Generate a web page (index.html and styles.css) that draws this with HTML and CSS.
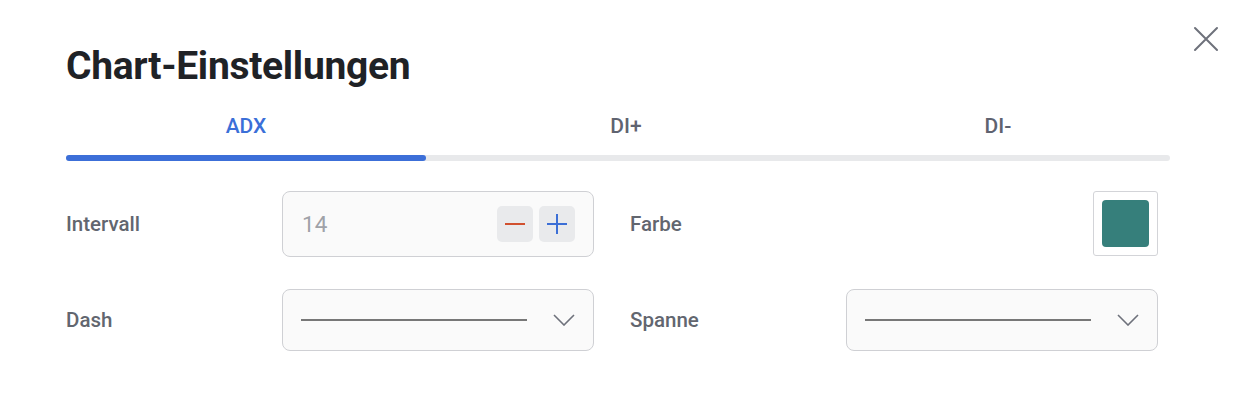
FILE: index.html
```html
<!DOCTYPE html>
<html lang="de">
<head>
<meta charset="utf-8">
<title>Chart-Einstellungen</title>
<link rel="stylesheet" href="styles.css">
</head>
<body>
<div class="dialog">
  <button class="close" aria-label="Schließen">
    <svg width="26" height="26" viewBox="0 0 26 26"><path d="M2 2 L24 24 M24 2 L2 24" stroke="#6e717b" stroke-width="2" stroke-linecap="round" fill="none"/></svg>
  </button>
  <h1 class="title">Chart-Einstellungen</h1>
  <div class="tabs">
    <div class="tab active">ADX</div>
    <div class="tab">DI+</div>
    <div class="tab">DI-</div>
  </div>
  <div class="track"><div class="indicator"></div></div>
  <div class="form">
    <div class="label">Intervall</div>
    <div class="stepper">
      <span class="value">14</span>
      <div class="btns">
        <button class="step"><svg width="22" height="22" viewBox="0 0 22 22"><path d="M1 11 H21" stroke="#d1512f" stroke-width="2"/></svg></button>
        <button class="step"><svg width="22" height="22" viewBox="0 0 22 22"><path d="M1 11 H21 M11 1 V21" stroke="#3c6fd6" stroke-width="2"/></svg></button>
      </div>
    </div>
    <div class="label label-right">Farbe</div>
    <div class="swatch-cell"><div class="swatch"><div class="swatch-fill"></div></div></div>
    <div class="label">Dash</div>
    <div class="select">
      <span class="line"></span>
      <svg width="22" height="12" viewBox="0 0 22 12"><path d="M1 1 L11 11 L21 1" stroke="#6e717b" stroke-width="1.6" fill="none"/></svg>
    </div>
    <div class="label label-right">Spanne</div>
    <div class="select">
      <span class="line"></span>
      <svg width="22" height="12" viewBox="0 0 22 12"><path d="M1 1 L11 11 L21 1" stroke="#6e717b" stroke-width="1.6" fill="none"/></svg>
    </div>
  </div>
</div>
</body>
</html>
```
FILE: styles.css
```css
* { box-sizing: border-box; }
html, body { margin: 0; padding: 0; background: #fff; }
body { font-family: Roboto, "Noto Sans", sans-serif; }
.dialog {
  position: relative;
  width: 1246px;
  height: 408px;
  padding: 40px 76px 0 66px;
}
.close {
  position: absolute;
  top: 26px;
  right: 27px;
  border: 0;
  background: none;
  padding: 0;
  width: 26px;
  height: 26px;
}
.title {
  margin: 0;
  font-size: 39px;
  font-weight: 700;
  color: #1f2226;
  line-height: 52px;
  letter-spacing: -0.3px;
}
.tabs {
  display: grid;
  grid-template-columns: 360px 360px 1fr;
  column-gap: 20px;
  margin-top: 18px;
  height: 32px;
}
.tab {
  text-align: center;
  font-size: 21px;
  font-weight: 500;
  color: #5f6370;
  line-height: 32px;
}
.tab.active { color: #3b6fd8; }
.track {
  margin-top: 13px;
  height: 6px;
  border-radius: 3px;
  background: #e8e9eb;
}
.indicator {
  width: 360px;
  height: 6px;
  border-radius: 3px;
  background: #3c6fd8;
}
.form {
  display: grid;
  grid-template-columns: 216px 312px 252px 312px;
  row-gap: 32px;
  margin-top: 30px;
  width: 1092px;
}
.label {
  display: flex;
  align-items: center;
  font-size: 20.5px;
  font-weight: 500;
  color: #62666f;
}
.label-right { padding-left: 36px; }
.stepper {
  height: 66px;
  border: 1px solid #cfd0d4;
  border-radius: 8px;
  background: #fafafa;
  display: flex;
  align-items: center;
  justify-content: space-between;
  padding: 0 18px 0 19px;
}
.value { font-size: 22.5px; color: #9fa2a8; }
.btns { display: flex; gap: 6px; }
.step {
  width: 36px;
  height: 36px;
  border: 0;
  border-radius: 5px;
  background: #e9eaec;
  padding: 0;
  display: flex;
  align-items: center;
  justify-content: center;
}
.swatch-cell { display: flex; justify-content: flex-end; }
.swatch {
  width: 65px;
  height: 65px;
  border: 1px solid #d3d4d8;
  border-radius: 3px;
  padding: 8px;
  background: #fff;
}
.swatch-fill { width: 100%; height: 100%; border-radius: 4px; background: #367f7b; }
.select {
  height: 62px;
  border: 1px solid #cfd0d4;
  border-radius: 8px;
  background: #fafafa;
  display: flex;
  align-items: center;
  padding: 0 18px 0 18px;
  gap: 26px;
}
.line { flex: 1; height: 2px; background: #777; }
```
